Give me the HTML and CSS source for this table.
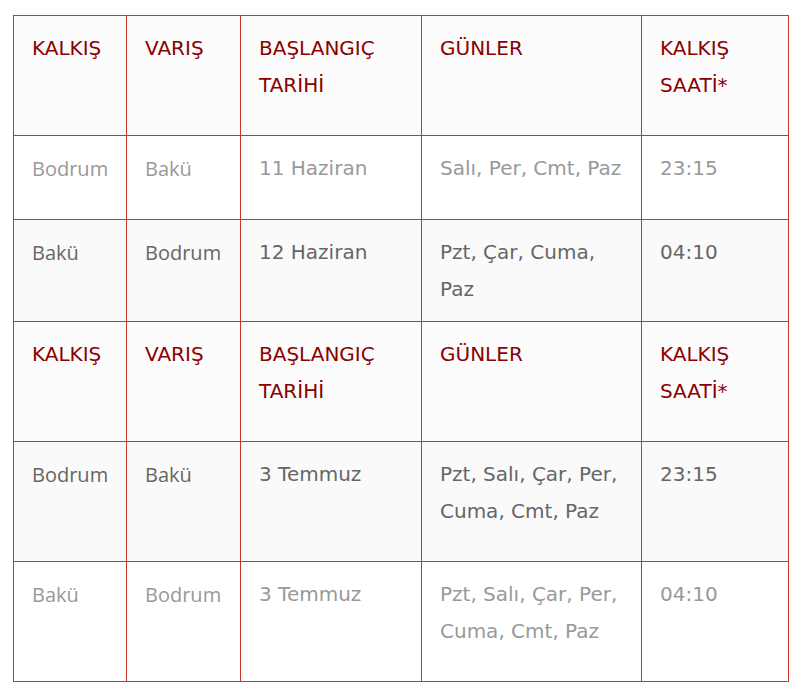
FILE: index.html
```html
<!DOCTYPE html>
<html lang="tr">
<head>
<meta charset="utf-8">
<title>Sefer Tablosu</title>
<link rel="stylesheet" href="styles.css">
</head>
<body>
<table class="flights">
  <colgroup>
    <col class="c1"><col class="c2"><col class="c3"><col class="c4"><col class="c5">
  </colgroup>
  <tr class="head">
    <th>KALKIŞ</th><th>VARIŞ</th><th>BAŞLANGIÇ TARİHİ</th><th>GÜNLER</th><th>KALKIŞ SAATİ*</th>
  </tr>
  <tr class="row light short">
    <td class="city">Bodrum</td><td class="city">Bakü</td><td>11 Haziran</td><td>Salı, Per, Cmt, Paz</td><td>23:15</td>
  </tr>
  <tr class="row dark alt mid">
    <td class="city">Bakü</td><td class="city">Bodrum</td><td>12 Haziran</td><td>Pzt, Çar, Cuma, Paz</td><td>04:10</td>
  </tr>
  <tr class="head">
    <th>KALKIŞ</th><th>VARIŞ</th><th>BAŞLANGIÇ TARİHİ</th><th>GÜNLER</th><th>KALKIŞ SAATİ*</th>
  </tr>
  <tr class="row dark alt">
    <td class="city">Bodrum</td><td class="city">Bakü</td><td>3 Temmuz</td><td>Pzt, Salı, Çar, Per, Cuma, Cmt, Paz</td><td>23:15</td>
  </tr>
  <tr class="row light">
    <td class="city">Bakü</td><td class="city">Bodrum</td><td>3 Temmuz</td><td>Pzt, Salı, Çar, Per, Cuma, Cmt, Paz</td><td>04:10</td>
  </tr>
</table>
</body>
</html>
```

FILE: styles.css
```css
html, body {
  margin: 0;
  padding: 0;
  background: #ffffff;
}

body {
  padding: 15px 0 0 13px;
  font-family: "DejaVu Sans", Verdana, sans-serif;
}

.flights {
  border-collapse: separate;
  border-spacing: 0;
  table-layout: fixed;
  width: 776px;
  box-sizing: border-box;
  border-left: 1px solid #c9342c;
  border-top: 1px solid #c9342c;
}

.c1 { width: 113px; }
.c2 { width: 114px; }
.c3 { width: 181px; }
.c4 { width: 220px; }
.c5 { width: 147px; }

.flights th,
.flights td {
  box-sizing: border-box;
  border-right: 1px solid #c9342c;
  border-bottom: 1px solid #c9342c;
  padding: 14px 18px 0 18px;
  vertical-align: top;
  text-align: left;
  font-size: 20px;
  line-height: 37px;
  font-weight: normal;
}

.head th {
  height: 120px;
  background: #fcfcfc;
  color: #8b0000;
}

.row td {
  height: 120px;
  background: #ffffff;
}

.row.short td { height: 84px; }
.row.mid td { height: 102px; }

.row.alt td { background: #fafafa; }

.row.light td { color: #999999; }
.row.dark td { color: #666666; }

.row td.city {
  font-family: "Open Sans", "DejaVu Sans", sans-serif;
}
```
